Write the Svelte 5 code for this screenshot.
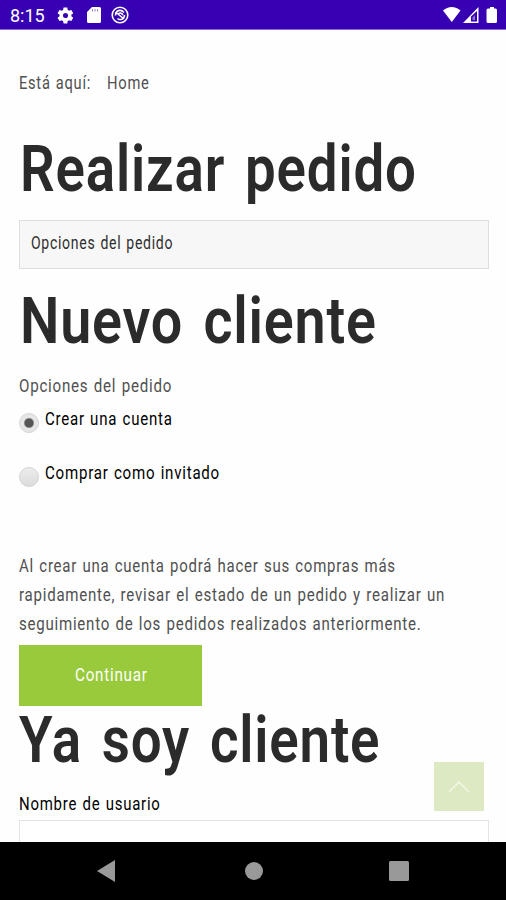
<!-- Checkout screen: account options and the top of the login form -->
<script lang="ts">
  let account = $state('register');

  const options = [
    { id: 'register', label: 'Crear una cuenta', width: 128 },
    { id: 'guest', label: 'Comprar como invitado', width: 175 },
  ];

  const intro = [
    { text: 'Al crear una cuenta podrá hacer sus compras más', width: 377 },
    { text: 'rapidamente, revisar el estado de un pedido y realizar un', width: 426 },
    { text: 'seguimiento de los pedidos realizados anteriormente.', width: 402 },
  ];

  // condense a line of text to a given width
  function fit(node: HTMLElement, width: number) {
    node.style.transform = `scaleX(${width / node.offsetWidth})`;
    node.style.marginRight = `${width - node.offsetWidth}px`;
  }
</script>

<div class="screen">
  <header class="status">
    <span class="status__time">8:15</span>
    <svg class="status__gear" viewBox="0 0 24 24" width="19" height="19">
      <path
        fill="#fff"
        fill-rule="evenodd"
        d="M19.4 13a7.8 7.8 0 0 0 0-2l2.1-1.6c.2-.2.2-.4.1-.7l-2-3.4c-.1-.3-.4-.3-.6-.2l-2.5 1a7.500 7.500 0 0 0-1.700-1L14.400 2.400c0-.2-.2-.4-.5-.4h-4c-.3 0-.5.2-.5.4L9 5.100c-.6.2-1.200.6-1.700 1l-2.500-1c-.2-.1-.5 0-.6.2l-2 3.400c-.1.3-.1.5.1.7L4.500 11a7.800 7.800 0 0 0 0 2l-2.200 1.600c-.2.2-.2.4-.1.7l2 3.400c.1.3.4.3.6.2l2.500-1c.5.4 1.100.7 1.700 1l.4 2.700c0 .2.2.4.5.4h4c.3 0 .5-.2.5-.4l.4-2.700c.6-.2 1.200-.6 1.700-1l2.500 1c.2.1.5 0 .6-.2l2-3.400c.1-.3.1-.5-.1-.7zM12 15.200a3.200 3.200 0 1 1 0-6.400 3.200 3.200 0 0 1 0 6.400z"
      />
    </svg>
    <svg class="status__card" viewBox="0 0 14 16" width="14" height="16">
      <path d="M5 0h7.500A1.500 1.500 0 0 1 14 1.500v13a1.500 1.500 0 0 1-1.500 1.500h-11A1.500 1.500 0 0 1 0 14.500V5z" fill="#fff" />
      <path d="M5.500 2v2.500M8 2v2.500M10.500 2v2.500" stroke="#3700b3" stroke-opacity="0.5" />
    </svg>
    <svg class="status__sync" viewBox="0 0 18 18" width="18" height="18" fill="none" stroke="#fff">
      <circle cx="9" cy="9" r="7.800" stroke-width="1.600" />
      <path d="M4.500 9.500C4.500 4 10 3 13 6.500M13.500 9c0 4.500-4.500 5.500-7 3.500M4.500 6l8.500 7M7.500 7.500q2.500-1.500 4.500 1.500" stroke-width="1.600" />
    </svg>
    <span class="status__space"></span>
    <svg class="status__signal" viewBox="0 0 56 18" width="56" height="18">
      <path d="M1 4.500C6-.3 13.500-.3 18.500 4.500L9.800 16z" fill="#fff" />
      <path d="M21 17 36.500 1v16z" fill="#fff" />
      <path d="M29 10.500 35 5v10.500H29z" fill="#3700b3" />
      <path d="M30.500 11.500 33 9v5h-2.500z" fill="#fff" opacity="0.45" />
      <path d="M48 1h4v1.500h1.500q1.500 0 1.500 1.500v11.500q0 1.500-1.500 1.500h-7.500q-1.500 0-1.500-1.500V4q0-1.500 1.500-1.500H48z" fill="#fff" />
    </svg>
  </header>

  <main class="page">
    <nav class="crumbs">
      <span class="line" use:fit={72}>Está aquí:</span>
      <span class="line" use:fit={43}>Home</span>
    </nav>

    <h1 class="title title--order"><span class="line" use:fit={397}>Realizar pedido</span></h1>
    <div class="step"><span class="line" use:fit={142}>Opciones del pedido</span></div>

    <h2 class="title title--new"><span class="line" use:fit={357}>Nuevo cliente</span></h2>
    <p class="lead"><span class="line" use:fit={153}>Opciones del pedido</span></p>

    <div class="options">
      {#each options as o (o.id)}
        <label class="option">
          <input class="option__radio" type="radio" name="account" value={o.id} bind:group={account} />
          <span class="line" use:fit={o.width}>{o.label}</span>
        </label>
      {/each}
    </div>

    <p class="intro">
      {#each intro as row (row.text)}
        <span class="intro__row"><span class="line" use:fit={row.width}>{row.text}</span></span>
      {/each}
    </p>
    <button class="continue" type="button"><span class="line" use:fit={73}>Continuar</span></button>

    <h2 class="title title--login"><span class="line" use:fit={361}>Ya soy cliente</span></h2>
    <label class="field">
      <span class="field__label"><span class="line" use:fit={142}>Nombre de usuario</span></span>
      <input class="field__input" type="text" />
    </label>

    <button class="top" type="button" aria-label="Subir">
      <svg viewBox="0 0 22 12" width="22" height="12" fill="none" stroke="#f4f9e9" stroke-width="1.300">
        <path d="M1 11 11 1l10 10" />
      </svg>
    </button>
  </main>

  <footer class="navbar">
    <svg viewBox="0 0 18 22" width="18" height="22"><path d="M0 11 18 0v22z" fill="#999" /></svg>
    <svg class="navbar__home" viewBox="0 0 18 18" width="18" height="18"><circle cx="9" cy="9" r="9" fill="#999" /></svg>
    <svg viewBox="0 0 20 20" width="20" height="20"><rect width="20" height="20" rx="1.500" fill="#999" /></svg>
  </footer>
</div>

<style>
  :global(body) {
    margin: 0;
  }
  .screen {
    display: flex;
    flex-direction: column;
    width: 506px;
    height: 900px;
    overflow: hidden;
    background: #fefefe;
    font-family: Roboto, 'Open Sans', sans-serif;
    font-size: 17.5px;
    line-height: 29px;
    color: #505050;
  }
  .status {
    display: flex;
    align-items: center;
    box-sizing: border-box;
    flex: none;
    height: 30px;
    padding: 1px 8px 0 10px;
    background: #3700b3;
    border-bottom: 1px solid #8568d0;
    color: #fff;
  }
  .status__time {
    width: 46px;
    font-size: 18px;
    font-weight: 400;
    padding-top: 1px;
  }
  .status__card {
    margin-left: 12px;
  }
  .status__sync {
    margin-left: 10px;
  }
  .status__space {
    flex: 1;
  }
  .page {
    position: relative;
    flex: none;
    box-sizing: border-box;
    height: 812px;
    padding: 39px 17px 0 19px;
    overflow: hidden;
  }
  .line {
    display: inline-block;
    white-space: nowrap;
    letter-spacing: 0.05em;
    word-spacing: 0.06em;
    transform-origin: left;
  }
  .crumbs {
    display: flex;
    gap: 16px;
  }
  .title {
    margin: 0;
    height: 60px;
    font-size: 65px;
    line-height: 66px;
    font-weight: 600;
    color: #2b2b2b;
  }
  .title .line {
    letter-spacing: 0.015em;
    word-spacing: 0.1em;
  }
  .title--order {
    margin-top: 38px;
    padding-left: 1px;
  }
  .step {
    box-sizing: border-box;
    height: 49px;
    margin-top: 24px;
    padding: 8px 11px;
    border: 1px solid #dedede;
    background: #f7f7f7;
    color: #2e2e2e;
  }
  .title--new {
    margin-top: 19px;
    padding-left: 1px;
  }
  .lead {
    margin: 24px 0 0;
  }
  .options {
    display: flex;
    flex-direction: column;
    gap: 25px;
    margin-top: 4px;
    color: #000;
  }
  .option {
    display: flex;
    gap: 6px;
  }
  .option__radio {
    appearance: none;
    box-sizing: border-box;
    flex: none;
    width: 20px;
    height: 20px;
    margin: 8px 0 0;
    border: 1px solid #d5d5d5;
    border-radius: 50%;
    background: linear-gradient(#ececec, #dcdcdc);
  }
  .option__radio:checked {
    background: radial-gradient(circle, #555 4px, #e6e6e6 5.5px);
  }
  .intro {
    margin: 64px 0 0;
  }
  .intro__row {
    display: block;
  }
  .continue {
    display: block;
    width: 183px;
    height: 61px;
    margin-top: 6px;
    padding: 0 0 0 56px;
    border: 0;
    background: #98ca3c;
    color: #fff;
    font: inherit;
    text-align: left;
  }
  .title--login {
    margin-top: 1px;
  }
  .field {
    display: block;
    margin-top: 23px;
    color: #000;
  }
  .field__label {
    display: block;
  }
  .field__input {
    display: block;
    box-sizing: border-box;
    width: 470px;
    height: 49px;
    margin-top: 1px;
    border: 1px solid #e4e4e4;
    background: #fff;
  }
  .top {
    position: absolute;
    right: 22px;
    bottom: 31px;
    display: flex;
    align-items: center;
    justify-content: center;
    width: 50px;
    height: 49px;
    padding: 0;
    border: 0;
    background: #dde9c3;
  }
  .navbar {
    display: flex;
    align-items: center;
    justify-content: space-between;
    box-sizing: border-box;
    flex: none;
    height: 58px;
    padding: 0 97px;
    background: #000;
  }
  .navbar__home {
    margin-left: 4px;
  }
</style>
